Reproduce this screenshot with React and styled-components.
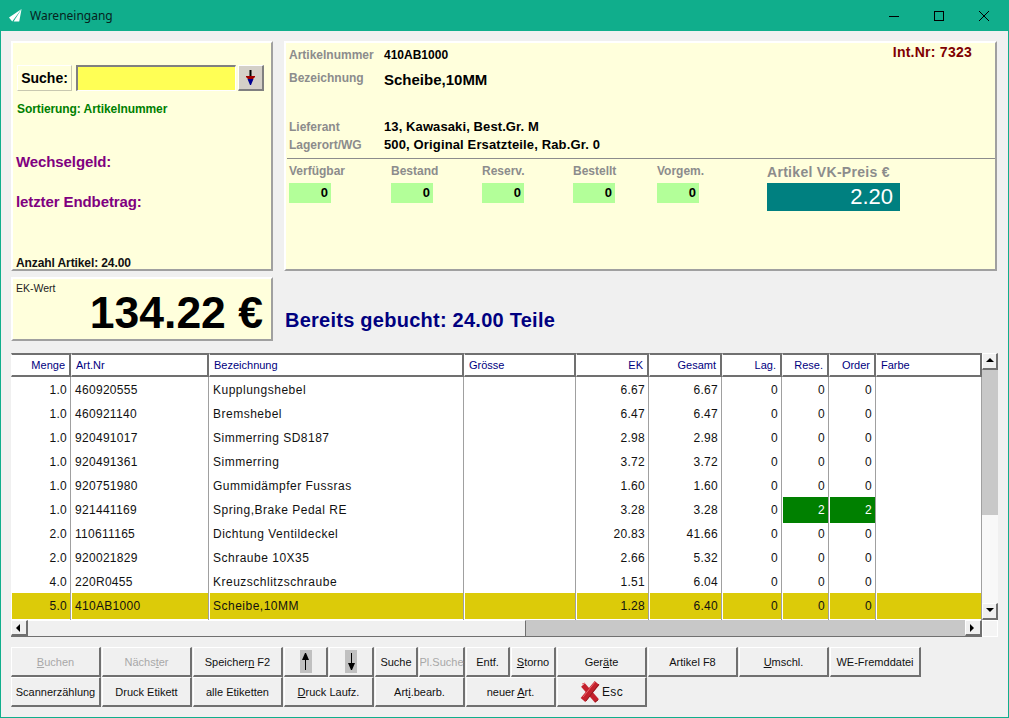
import React from 'react'
import styled, { createGlobalStyle } from 'styled-components'

const GlobalStyle = createGlobalStyle`
  html, body { margin: 0; padding: 0; background: #f0f0f0; }
  body { font-family: "Liberation Sans", Arial, sans-serif; }
`

const Window = styled.div`
  width: 1009px;
  height: 718px;
  box-sizing: border-box;
  display: flex;
  flex-direction: column;
  background: #f0f0f0;
  border: 1px solid #10ae8c;
  border-top: 0;
  overflow: hidden;
`
const TitleBar = styled.div`
  height: 31px;
  flex: none;
  display: flex;
  align-items: center;
  background: #10ae8c;
  padding: 0 2px 0 8px;
  font: 12px "Noto Sans", sans-serif;
  color: #06231d;
`
const TitleText = styled.span`
  margin-left: 8px;
  flex: 1;
`
const WinControl = styled.div`
  width: 45px;
  height: 31px;
  display: flex;
  align-items: center;
  justify-content: center;
`
const Main = styled.div`
  flex: 1;
  display: flex;
  flex-direction: column;
  padding: 10px 0 0 10px;
`
const PanelRow = styled.div`
  display: flex;
  gap: 11px;
`
const Panel = styled.div`
  box-sizing: border-box;
  background: #ffffdc;
  border: 2px solid;
  border-color: #fff #a0a0a0 #a0a0a0 #fff;
`
const LeftPanel = styled(Panel)`
  width: 262px;
  height: 230px;
  padding: 22px 0 0 4px;
`
const RightPanel = styled(Panel)`
  width: 713px;
  height: 230px;
  padding: 3px 0 0 3px;
`
const SearchRow = styled.div`
  display: flex;
  height: 26px;
`
const SearchLabel = styled.div`
  width: 55px;
  box-sizing: border-box;
  border: 1px solid #fff;
  border-color: #fff #c8c8b0 #c8c8b0 #fff;
  font-weight: bold;
  font-size: 14px;
  line-height: 24px;
  text-align: center;
  color: #000;
`
const SearchInput = styled.div`
  width: 160px;
  margin-left: 4px;
  box-sizing: border-box;
  background: #ffff55;
  border: 1px solid;
  border-width: 2px 1px 1px 2px;
  border-color: #808080 #fff #fff #808080;
`
const SearchButton = styled.div`
  width: 26px;
  margin-left: 2px;
  box-sizing: border-box;
  background: #d4d0c8;
  border: 1px solid;
  border-width: 1px 2px 2px 1px;
  border-color: #fff #808080 #808080 #fff;
  display: flex;
  align-items: center;
  justify-content: center;
`
const Sorting = styled.div`
  margin-top: 11px;
  font-weight: bold;
  font-size: 12px;
  line-height: 15px;
  letter-spacing: -0.08px;
  color: #008000;
`
const MoneyLabel = styled.div`
  margin-top: ${p => p.$top}px;
  margin-left: -1px;
  font-weight: bold;
  font-size: 15px;
  line-height: 18px;
  letter-spacing: -0.1px;
  color: #800080;
`
const ArticleCount = styled.div`
  margin-top: 45px;
  margin-left: -1px;
  font-weight: bold;
  font-size: 12px;
  line-height: 14px;
  letter-spacing: -0.1px;
  color: #111;
`
const InfoRow = styled.div`
  display: flex;
  align-items: flex-start;
  height: ${p => p.$height}px;
  margin-top: ${p => p.$top || 0}px;
  padding-right: 23px;
`
const InfoLabel = styled.div`
  width: 95px;
  flex: none;
  font-weight: bold;
  font-size: 12px;
  line-height: 14px;
  color: #8c8c8c;
`
const InfoValue = styled.div`
  flex: 1;
  font-weight: bold;
  font-size: ${p => p.$size || 12}px;
  line-height: ${p => (p.$size === 15 ? 18 : 14)}px;
  letter-spacing: ${p => p.$spacing || 0}px;
  color: #000;
`
const InternalNumber = styled.div`
  margin-top: -4px;
  font-weight: bold;
  font-size: 14px;
  line-height: 16px;
  letter-spacing: 0.25px;
  color: #800000;
`
const Divider = styled.div`
  height: 1px;
  margin: 0 0 0 -2px;
  background: #8c8c8c;
`
const StockRow = styled.div`
  display: flex;
  margin-top: 5px;
`
const StockCol = styled.div`
  width: ${p => p.$width}px;
  flex: none;
`
const StockLabel = styled.div`
  font-weight: bold;
  font-size: 12px;
  line-height: 14px;
  height: 19px;
  color: #8c8c8c;
`
const StockValue = styled.div`
  width: 42px;
  height: 20px;
  box-sizing: border-box;
  padding-right: 3px;
  background: #b3ff99;
  font-weight: bold;
  font-size: 13px;
  line-height: 20px;
  text-align: right;
  color: #000;
`
const PriceLabel = styled.div`
  font-weight: bold;
  font-size: 14px;
  line-height: 16px;
  height: 19px;
  letter-spacing: 0.3px;
  color: #8c8c8c;
  white-space: nowrap;
`
const PriceValue = styled.div`
  width: 133px;
  height: 28px;
  box-sizing: border-box;
  padding-right: 7px;
  background: #008080;
  font-size: 22px;
  line-height: 28px;
  text-align: right;
  color: #fff;
`
const SecondRow = styled(PanelRow)`
  margin-top: 6px;
  gap: 12px;
  align-items: stretch;
`
const ValuePanel = styled(Panel)`
  width: 262px;
  height: 64px;
  padding: 3px 8px 0 3px;
`
const ValueCaption = styled.div`
  font-size: 10.5px;
  line-height: 12px;
  color: #222;
`
const ValueAmount = styled.div`
  margin-top: -4px;
  font-weight: bold;
  font-size: 44.5px;
  line-height: 46px;
  text-align: right;
  color: #000;
`
const BookedText = styled.div`
  align-self: flex-end;
  margin-bottom: 9px;
  font-weight: bold;
  font-size: 20px;
  line-height: 24px;
  letter-spacing: 0.25px;
  color: #000080;
`
const GridArea = styled.div`
  margin-top: 12px;
  width: 987px;
  display: grid;
  grid-template-columns: 971px 16px;
  grid-template-rows: 267px 17px;
`
const TableBox = styled.div`
  background: #fff;
  overflow: hidden;
`
const columns = '60px 138px 255px 112px 73px 73px 60px 47px 47px 106px'
const HeaderRow = styled.div`
  display: grid;
  grid-template-columns: ${columns};
  height: 24px;
`
const HeaderCell = styled.div`
  box-sizing: border-box;
  padding: 0 4px;
  border: 1px solid;
  border-width: 2px 2px 2px 1px;
  border-color: #707070 #707070 #707070 #fff;
  font-size: 11px;
  line-height: 20px;
  text-align: ${p => (p.$right ? 'right' : 'left')};
  color: #000080;
`
const BodyRow = styled.div`
  display: grid;
  grid-template-columns: ${columns};
  height: ${p => p.$height || 24}px;
`
const BodyCell = styled.div`
  box-sizing: border-box;
  padding: 0 3px 0 4px;
  border-right: 1px solid #a0a0a0;
  font-size: 12px;
  line-height: 26px;
  letter-spacing: ${p => (p.$wide ? 0.5 : 0.3)}px;
  white-space: nowrap;
  text-align: ${p => (p.$right ? 'right' : 'left')};
  color: ${p => (p.$bg === '#008000' ? '#fff' : '#111')};
  background: ${p => p.$bg || 'transparent'};
  background-clip: padding-box;
  box-shadow: ${p => (p.$bg ? 'inset 1px 0 0 #fff' : 'none')};
`
const VScroll = styled.div`
  display: flex;
  flex-direction: column;
  background: #f4f4f4;
`
const ScrollButton = styled.div`
  flex: none;
  width: ${p => p.$w}px;
  height: ${p => p.$h}px;
  box-sizing: border-box;
  background: #f0f0f0;
  border: 1px solid;
  border-width: 1px 2px 2px 1px;
  border-color: #fff #707070 #707070 #fff;
  display: flex;
  align-items: center;
  justify-content: center;
`
const VThumb = styled.div`
  flex: none;
  height: 145px;
  background: #c8c8c8;
`
const VTrack = styled.div`
  flex: 1;
  background: #f8f8f8;
`
const HScroll = styled.div`
  display: flex;
  background: #f0f0f0;
  border-bottom: 1px solid #707070;
`
const HTrack = styled.div`
  width: 498px;
  flex: none;
  border-right: 1px solid #707070;
  box-sizing: border-box;
  border-top: 1px solid #fff;
`
const HThumb = styled.div`
  flex: 1;
  background: #c8c8c8;
`
const Corner = styled.div`
  background: #f4f4f4;
  border: 1px solid #fff;
  box-sizing: border-box;
`
const Toolbar = styled.div`
  margin-top: 10px;
  display: flex;
  flex-direction: column;
`
const ToolRow = styled.div`
  display: flex;
  gap: 1px;
  height: 30px;
`
const Tool = styled.button`
  width: ${p => p.$w}px;
  flex: none;
  box-sizing: border-box;
  padding: 0;
  margin: 0;
  background: #f0f0f0;
  border: 1px solid;
  border-width: 1px 2px 2px 1px;
  border-color: #fff #707070 #707070 #fff;
  border-radius: 0;
  font-family: "Liberation Sans", Arial, sans-serif;
  font-size: 11px;
  white-space: nowrap;
  color: ${p => (p.disabled ? '#a8a8a8' : '#111')};
  display: flex;
  align-items: center;
  justify-content: center;
  gap: 2px;
`
const EscText = styled.span`
  font-size: 12px;
  letter-spacing: 0.4px;
`
const ArrowBox = styled.span`
  width: 12px;
  height: 23px;
  background: #c0c0c0;
  display: flex;
  align-items: center;
  justify-content: center;
`

const rows = [
  ['1.0', '460920555', 'Kupplungshebel', '6.67', '6.67', '0', '0', '0'],
  ['1.0', '460921140', 'Bremshebel', '6.47', '6.47', '0', '0', '0'],
  ['1.0', '920491017', 'Simmerring SD8187', '2.98', '2.98', '0', '0', '0'],
  ['1.0', '920491361', 'Simmerring', '3.72', '3.72', '0', '0', '0'],
  ['1.0', '920751980', 'Gummidämpfer Fussras', '1.60', '1.60', '0', '0', '0'],
  ['1.0', '921441169', 'Spring,Brake Pedal RE', '3.28', '3.28', '0', '2', '2'],
  ['2.0', '110611165', 'Dichtung Ventildeckel', '20.83', '41.66', '0', '0', '0'],
  ['2.0', '920021829', 'Schraube 10X35', '2.66', '5.32', '0', '0', '0'],
  ['4.0', '220R0455', 'Kreuzschlitzschraube', '1.51', '6.04', '0', '0', '0'],
  ['5.0', '410AB1000', 'Scheibe,10MM', '1.28', '6.40', '0', '0', '0'],
]

const stock = [
  ['Verfügbar', 102],
  ['Bestand', 91],
  ['Reserv.', 91],
  ['Bestellt', 84],
  ['Vorgem.', 110],
]

const headers = [
  ['Menge', true],
  ['Art.Nr', false],
  ['Bezeichnung', false],
  ['Grösse', false],
  ['EK', true],
  ['Gesamt', true],
  ['Lag.', true],
  ['Rese.', true],
  ['Order', true],
  ['Farbe', false],
]

const Triangle = ({ dir }) => {
  const points = {
    up: '0,5 4,1 8,5',
    down: '0,1 8,1 4,5',
    left: '5,0 5,8 1,4',
    right: '1,0 1,8 5,4',
  }
  return (
    <svg width="8" height="8" viewBox="0 0 8 8">
      <polygon points={points[dir]} fill="#000" />
    </svg>
  )
}

const Arrow = ({ down }) => (
  <svg width="7" height="17" viewBox="0 0 7 17">
    {down ? (
      <path d="M3 0h1v10h3l-3 7h-1l-3-7h3z" fill="#000" />
    ) : (
      <path d="M3 0h1l3 7h-3v10h-1v-10h-3z" fill="#000" />
    )}
  </svg>
)

const Cross = () => (
  <svg width="20" height="22" viewBox="0 0 20 22">
    <path d="M3 4l14 16" stroke="#c4202c" strokeWidth="5" />
    <path d="M17 2L3 19" stroke="#c4202c" strokeWidth="6" />
    <path d="M15 1L3 16M2 3l3-1" stroke="#e8636a" strokeWidth="1" fill="none" />
    <path d="M19 3L6 20M18 19l-3 2" stroke="#8e1a1f" strokeWidth="1" fill="none" />
  </svg>
)

export default function App() {
  return (
    <Window>
      <GlobalStyle />
      <TitleBar>
        <svg width="13" height="13" viewBox="0 0 13 13">
          <polygon points="12.6,0 0,8.5 3.2,12.5" fill="#fff" />
          <polygon points="12.6,0 4.6,12.5 10.2,12.5" fill="#fff" />
        </svg>
        <TitleText>Wareneingang</TitleText>
        <WinControl>
          <svg width="10" height="10" viewBox="0 0 10 10">
            <path d="M0 5.5h10" stroke="#000" />
          </svg>
        </WinControl>
        <WinControl>
          <svg width="10" height="10" viewBox="0 0 10 10">
            <rect x=".5" y=".5" width="9" height="9" fill="none" stroke="#000" />
          </svg>
        </WinControl>
        <WinControl>
          <svg width="10" height="10" viewBox="0 0 10 10">
            <path d="M0 0l10 10M10 0L0 10" stroke="#000" />
          </svg>
        </WinControl>
      </TitleBar>
      <Main>
        <PanelRow>
          <LeftPanel>
            <SearchRow>
              <SearchLabel>Suche:</SearchLabel>
              <SearchInput />
              <SearchButton>
                <svg width="9" height="15" viewBox="0 0 9 15">
                  <rect x="3.5" y="0" width="2" height="6" fill="#000" />
                  <path d="M0 6h9v1L7 9H2L0 7z" fill="#a00000" />
                  <path d="M1.5 9h6L5 15H4z" fill="#000090" />
                </svg>
              </SearchButton>
            </SearchRow>
            <Sorting>Sortierung: Artikelnummer</Sorting>
            <MoneyLabel $top={36}>Wechselgeld:</MoneyLabel>
            <MoneyLabel $top={22}>letzter Endbetrag:</MoneyLabel>
            <ArticleCount>Anzahl Artikel: 24.00</ArticleCount>
          </LeftPanel>
          <RightPanel>
            <InfoRow $height={23} $top={2}>
              <InfoLabel>Artikelnummer</InfoLabel>
              <InfoValue>410AB1000</InfoValue>
              <InternalNumber>Int.Nr: 7323</InternalNumber>
            </InfoRow>
            <InfoRow $height={49}>
              <InfoLabel>Bezeichnung</InfoLabel>
              <InfoValue $size={15}>Scheibe,10MM</InfoValue>
            </InfoRow>
            <InfoRow $height={18}>
              <InfoLabel>Lieferant</InfoLabel>
              <InfoValue $size={13} $spacing={0.1}>13, Kawasaki, Best.Gr. M</InfoValue>
            </InfoRow>
            <InfoRow $height={20}>
              <InfoLabel>Lagerort/WG</InfoLabel>
              <InfoValue $size={13} $spacing={0.14}>500, Original Ersatzteile, Rab.Gr. 0</InfoValue>
            </InfoRow>
            <Divider />
            <StockRow>
              {stock.map(([label, width]) => (
                <StockCol key={label} $width={width}>
                  <StockLabel>{label}</StockLabel>
                  <StockValue>0</StockValue>
                </StockCol>
              ))}
              <StockCol $width={133}>
                <PriceLabel>Artikel VK-Preis €</PriceLabel>
                <PriceValue>2.20</PriceValue>
              </StockCol>
            </StockRow>
          </RightPanel>
        </PanelRow>
        <SecondRow>
          <ValuePanel>
            <ValueCaption>EK-Wert</ValueCaption>
            <ValueAmount>134.22 €</ValueAmount>
          </ValuePanel>
          <BookedText>Bereits gebucht: 24.00 Teile</BookedText>
        </SecondRow>
        <GridArea>
          <TableBox>
            <HeaderRow>
              {headers.map(([label, right]) => (
                <HeaderCell key={label} $right={right}>
                  {label}
                </HeaderCell>
              ))}
            </HeaderRow>
            {rows.map((r, i) => {
              const selected = i === rows.length - 1
              const bg = selected ? '#dccb09' : undefined
              return (
                <BodyRow key={r[1]}>
                  <BodyCell $right $bg={bg}>{r[0]}</BodyCell>
                  <BodyCell $bg={bg}>{r[1]}</BodyCell>
                  <BodyCell $wide $bg={bg}>{r[2]}</BodyCell>
                  <BodyCell $bg={bg} />
                  <BodyCell $right $bg={bg}>{r[3]}</BodyCell>
                  <BodyCell $right $bg={bg}>{r[4]}</BodyCell>
                  <BodyCell $right $bg={bg}>{r[5]}</BodyCell>
                  <BodyCell $right $bg={r[6] === '2' ? '#008000' : bg}>{r[6]}</BodyCell>
                  <BodyCell $right $bg={r[7] === '2' ? '#008000' : bg}>{r[7]}</BodyCell>
                  <BodyCell $bg={bg} />
                </BodyRow>
              )
            })}
            <BodyRow $height={3}>
              {headers.map(([label]) => (
                <BodyCell key={label} />
              ))}
            </BodyRow>
          </TableBox>
          <VScroll>
            <ScrollButton $w={16} $h={17}><Triangle dir="up" /></ScrollButton>
            <VThumb />
            <VTrack />
            <ScrollButton $w={16} $h={17}><Triangle dir="down" /></ScrollButton>
          </VScroll>
          <HScroll>
            <ScrollButton $w={17} $h={16}><Triangle dir="left" /></ScrollButton>
            <HTrack />
            <HThumb />
            <ScrollButton $w={17} $h={16}><Triangle dir="right" /></ScrollButton>
          </HScroll>
          <Corner />
        </GridArea>
        <Toolbar>
          <ToolRow>
            <Tool $w={90} disabled><span><u>B</u>uchen</span></Tool>
            <Tool $w={90} disabled><span>Nächs<u>t</u>er</span></Tool>
            <Tool $w={90}><span>Speicher<u>n</u> F2</span></Tool>
            <Tool $w={44}><ArrowBox><Arrow /></ArrowBox></Tool>
            <Tool $w={45}><ArrowBox><Arrow down /></ArrowBox></Tool>
            <Tool $w={43}>Suche</Tool>
            <Tool $w={46} disabled>Pl.Suche</Tool>
            <Tool $w={44}>Entf.</Tool>
            <Tool $w={45}><span><u>S</u>torno</span></Tool>
            <Tool $w={90}><span>Ger<u>ä</u>te</span></Tool>
            <Tool $w={90}>Artikel F8</Tool>
            <Tool $w={90}><span><u>U</u>mschl.</span></Tool>
            <Tool $w={91}>WE-Fremddatei</Tool>
          </ToolRow>
          <ToolRow>
            <Tool $w={90}>Scannerzählung</Tool>
            <Tool $w={90}>Druck Etikett</Tool>
            <Tool $w={90}>alle Etiketten</Tool>
            <Tool $w={90}><span><u>D</u>ruck Laufz.</span></Tool>
            <Tool $w={90}><span>Art<u>i</u>.bearb.</span></Tool>
            <Tool $w={90}><span>neuer <u>A</u>rt.</span></Tool>
            <Tool $w={90}><Cross /><EscText>Esc</EscText></Tool>
          </ToolRow>
        </Toolbar>
      </Main>
    </Window>
  )
}
